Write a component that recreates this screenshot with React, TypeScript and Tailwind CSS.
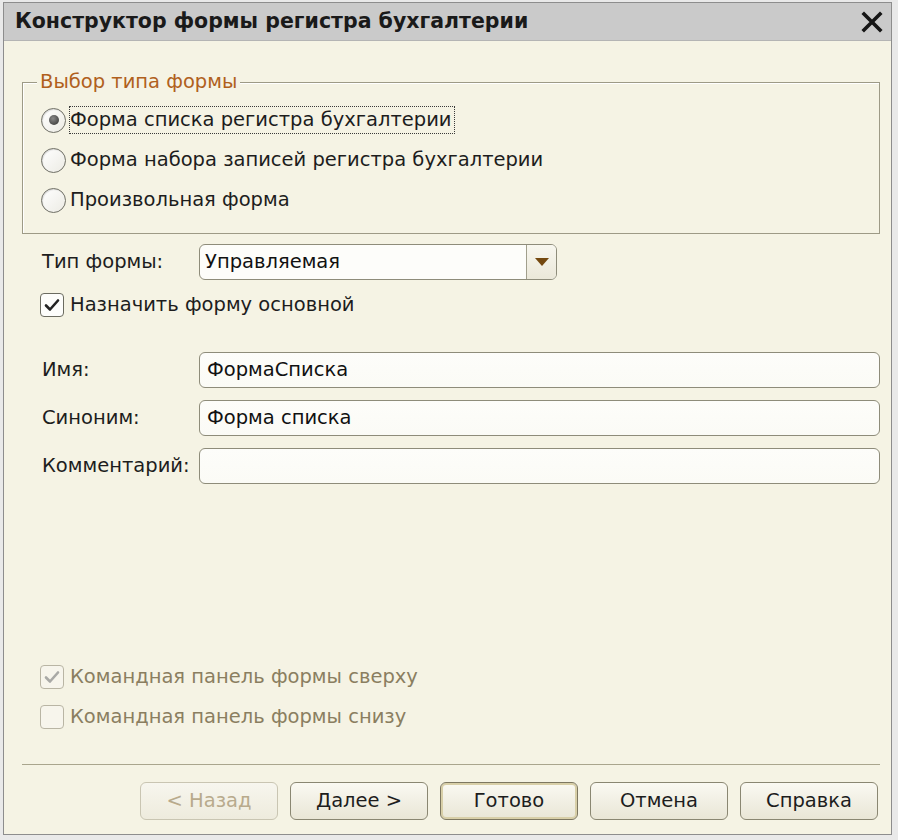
import React from 'react';

const font = { fontFamily: '"DejaVu Sans", "Liberation Sans", Arial, sans-serif' };

const Radio: React.FC<{ checked?: boolean; label: string; focused?: boolean }> = ({ checked, label, focused }) => (
  <div className="flex h-[40px] items-center pl-[18px]">
    <div className="flex h-[25px] w-[25px] items-center justify-center rounded-full border border-[#6f6f66] bg-gradient-to-br from-[#ffffff] to-[#ecebe4] shadow-[inset_1px_1px_1px_rgba(0,0,0,0.12)]">
      {checked && <div className="h-[10px] w-[10px] rounded-full bg-[radial-gradient(circle_at_40%_35%,#8a8a8a,#2e2e2e)]" />}
    </div>
    <span
      className={`ml-[3px] flex h-[28px] items-center pr-[2px] text-[19.5px] text-[#1d1d1d] ${
        focused ? 'border border-dotted border-[#3a3a3a]' : 'border border-transparent'
      }`}
    >
      {label}
    </span>
  </div>
);

const Check: React.FC<{ checked?: boolean; disabled?: boolean; label: string }> = ({ checked, disabled, label }) => (
  <div className="flex h-[36px] items-center pl-[18px]">
    <div
      className={`flex h-[24px] w-[24px] items-center justify-center rounded-[4px] border ${
        disabled ? 'border-[#b9b5a4] bg-[#f7f5ec]' : 'border-[#6b6b60] bg-[#fdfdfb]'
      }`}
    >
      {checked && (
        <svg width="16" height="14" viewBox="0 0 16 14">
          <path
            d="M2 7.5 L6 11.5 L14 2.5"
            fill="none"
            stroke={disabled ? '#a9a9a6' : '#222'}
            strokeWidth="2.6"
            strokeLinecap="round"
            strokeLinejoin="round"
          />
        </svg>
      )}
    </div>
    <span className={`ml-[6px] text-[19.5px] ${disabled ? 'text-[#8a7e60]' : 'text-[#1d1d1d]'}`}>{label}</span>
  </div>
);

const Field: React.FC<{ label: string; value?: string; className?: string }> = ({ label, value, className }) => (
  <div className={`flex h-[36px] items-center ${className ?? ''}`}>
    <div className="w-[177px] shrink-0 pl-[20px] text-[19.5px] text-[#1d1d1d]">{label}</div>
    <div className="flex h-[36px] flex-1 items-center rounded-[6px] border border-[#8e8c7a] bg-gradient-to-b from-[#fdfdfa] to-[#fbfbf6] pl-[7px] text-[19.5px] text-[#111]">
      {value}
    </div>
  </div>
);

const Button: React.FC<{ label: string; disabled?: boolean; primary?: boolean }> = ({ label, disabled, primary }) => (
  <div
    className={`flex h-[38px] w-[138px] items-center justify-center rounded-[6px] border text-[19.5px] ${
      disabled
        ? 'border-[#c9c5b2] bg-gradient-to-b from-[#f7f6ee] to-[#eeebdd] text-[#b8aa8c]'
        : primary
        ? 'border-[#7d7760] bg-gradient-to-b from-[#faf9f2] to-[#e9e6d6] text-[#1d1d1d] shadow-[inset_0_0_0_2px_#d8cfa8]'
        : 'border-[#8a8772] bg-gradient-to-b from-[#faf9f2] to-[#e9e6d6] text-[#1d1d1d]'
    }`}
  >
    {label}
  </div>
);

export default function App() {
  return (
    <div className="h-[840px] w-[898px] bg-[#e9e9e9] pb-[5px] pl-[3px] pr-[6px] pt-[2px]" style={font}>
      <div className="flex h-full flex-col border border-[#8d8d8d]">
        <div className="flex h-[38px] shrink-0 items-center justify-between border-b border-[#b4b4b4] bg-[#cacaca] pl-[11px] pr-[8px]">
          <span className="text-[20.5px] font-bold text-[#1a1a1a]">
            Конструктор формы регистра бухгалтерии
          </span>
          <svg width="22" height="22" viewBox="0 0 22 22">
            <path d="M3 3 L19 19 M19 3 L3 19" stroke="#151515" strokeWidth="3.6" strokeLinecap="square" />
          </svg>
        </div>

        <div className="flex flex-1 flex-col bg-[#f5f3e4] pl-[18px] pr-[11px]">
          {/* Выбор типа формы */}
          <div className="relative mt-[41px] h-[152px] border border-[#9d9a86] pt-[17px] shadow-[inset_1px_1px_0_#ffffff]">
            <span className="absolute left-[14px] top-[-14px] bg-[#f5f3e4] px-[3px] text-[19.5px] leading-[26px] text-[#b0601c]">
              Выбор типа формы
            </span>
            <Radio checked focused label="Форма списка регистра бухгалтерии" />
            <Radio label="Форма набора записей регистра бухгалтерии" />
            <Radio label="Произвольная форма" />
          </div>

          {/* Тип формы */}
          <div className="mt-[10px] flex h-[36px] items-center">
            <div className="w-[177px] shrink-0 pl-[20px] text-[19.5px] text-[#1d1d1d]">Тип формы:</div>
            <div className="flex h-[36px] w-[358px] items-stretch overflow-hidden rounded-[6px] border border-[#8e8c7a] bg-[#fdfdfa]">
              <div className="flex flex-1 items-center pl-[5px] text-[19.5px] text-[#111]">Управляемая</div>
              <div className="flex w-[30px] items-center justify-center border-l border-[#a19f8c] bg-gradient-to-b from-[#f8f7ef] to-[#ebe8d9]">
                <svg width="14" height="8" viewBox="0 0 14 8">
                  <path d="M0 0 H14 L7 8 Z" fill="#74480f" />
                </svg>
              </div>
            </div>
          </div>

          <div className="mt-[7px]">
            <Check checked label="Назначить форму основной" />
          </div>

          <Field className="mt-[29px]" label="Имя:" value="ФормаСписка" />
          <Field className="mt-[12px]" label="Синоним:" value="Форма списка" />
          <Field className="mt-[12px]" label="Комментарий:" />

          <div className="mt-[175px]">
            <Check checked disabled label="Командная панель формы сверху" />
          </div>
          <div className="mt-[4px]">
            <Check disabled label="Командная панель формы снизу" />
          </div>

          <div className="mt-[29px] h-[2px] border-t border-[#a9a58d] border-b-white" />

          <div className="mt-[16px] flex justify-end gap-[12px] pr-[2px]">
            <Button disabled label="< Назад" />
            <Button label="Далее >" />
            <Button primary label="Готово" />
            <Button label="Отмена" />
            <Button label="Справка" />
          </div>
        </div>
      </div>
    </div>
  );
}
